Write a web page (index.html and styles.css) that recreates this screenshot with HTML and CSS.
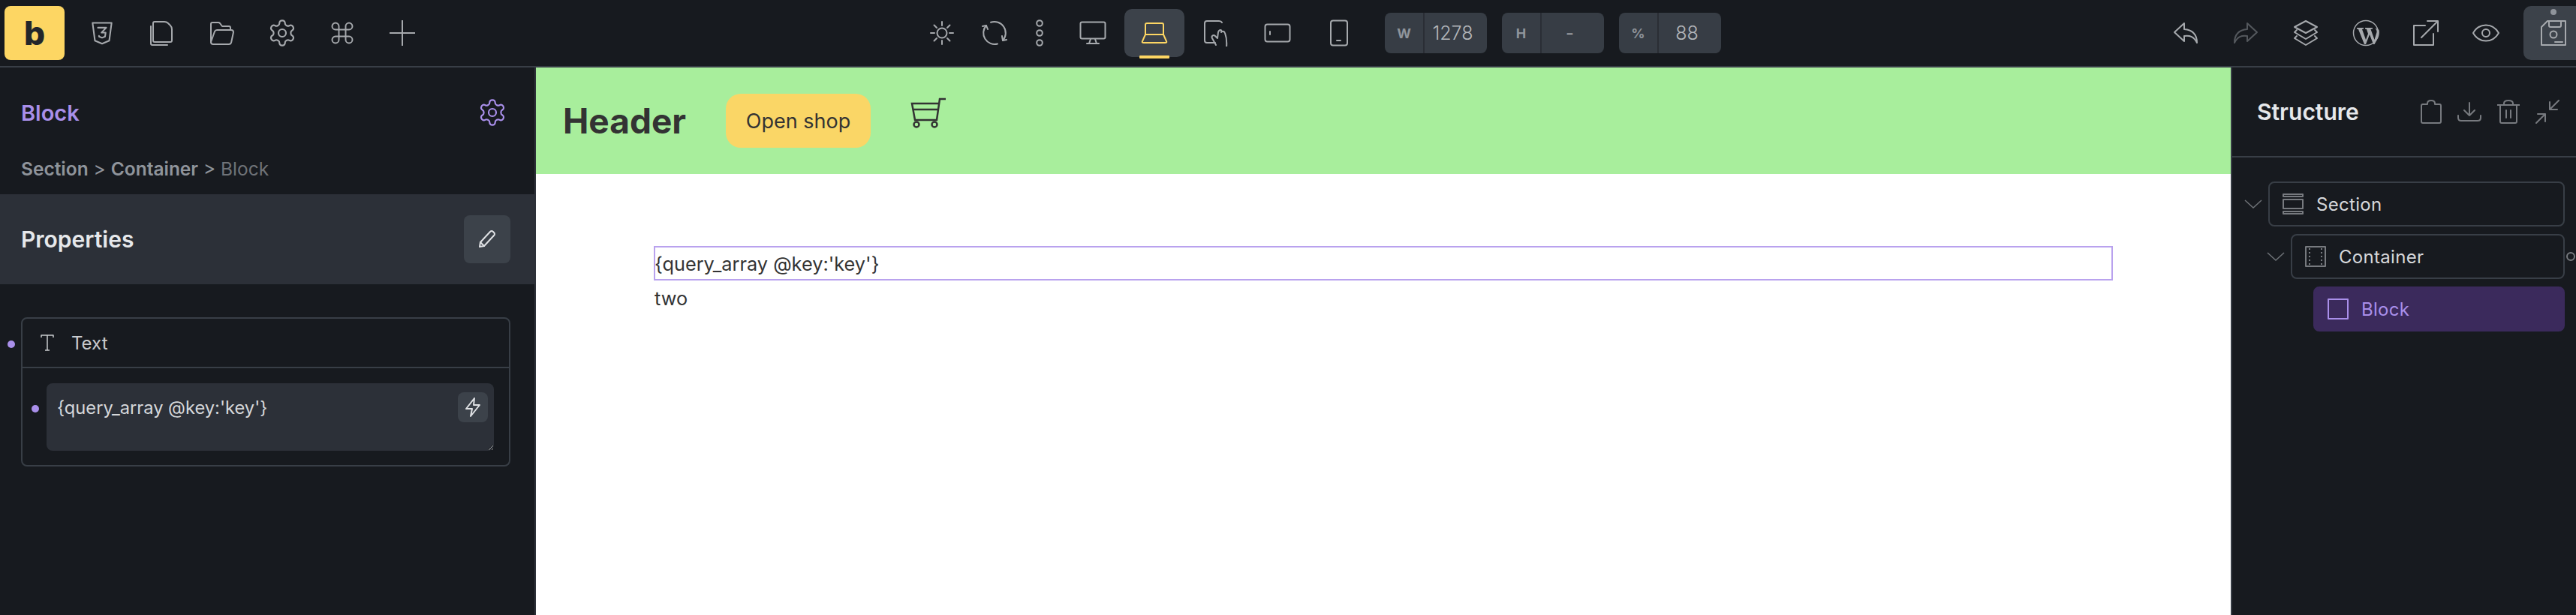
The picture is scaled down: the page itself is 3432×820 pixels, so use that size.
FILE: index.html
```html
<!DOCTYPE html>
<html lang="en">
<head>
<meta charset="utf-8">
<title>Builder</title>
<link rel="stylesheet" href="styles.css">
</head>
<body>
<svg class="defs" width="0" height="0" aria-hidden="true">
  <symbol id="gear" viewBox="0 0 24 24"><path d="M12.22 2h-.44a2 2 0 0 0-2 2v.18a2 2 0 0 1-1 1.73l-.43.25a2 2 0 0 1-2 0l-.15-.08a2 2 0 0 0-2.730.73l-.22.38a2 2 0 0 0 .73 2.730l.15.1a2 2 0 0 1 1 1.720v.51a2 2 0 0 1-1 1.740l-.15.09a2 2 0 0 0-.73 2.730l.22.38a2 2 0 0 0 2.730.73l.15-.08a2 2 0 0 1 2 0l.43.25a2 2 0 0 1 1 1.730V20a2 2 0 0 0 2 2h.44a2 2 0 0 0 2-2v-.18a2 2 0 0 1 1-1.730l.43-.25a2 2 0 0 1 2 0l.15.08a2 2 0 0 0 2.730-.73l.22-.39a2 2 0 0 0-.73-2.730l-.15-.08a2 2 0 0 1-1-1.740v-.5a2 2 0 0 1 1-1.740l.15-.09a2 2 0 0 0 .73-2.730l-.22-.38a2 2 0 0 0-2.730-.73l-.15.08a2 2 0 0 1-2 0l-.43-.25a2 2 0 0 1-1-1.730V4a2 2 0 0 0-2-2z"/><circle cx="12" cy="12" r="3"/></symbol>
  <symbol id="chev" viewBox="0 0 24 12"><path d="M1 1l11 10L23 1"/></symbol>
</svg>

<header class="topbar">
  <div class="tb-left">
    <div class="logo">b</div>
    <span class="slot"><svg class="ic" width="38" height="38" viewBox="0 0 24 24"><path d="M20 3.500l-2 15-6 2.500-6-2.500-2-15z"/><path d="M8.500 7.500h7l-4 4.200h3.500l-.5 3.300-2.500 1-2.500-1-.1-.6"/></svg></span>
    <span class="slot"><svg class="ic" width="34" height="34" viewBox="0 0 34 34"><path d="M7 2h13q3 0 5 2l3 3q2 2 2 5v15q0 2-2 2H7q-2 0-2-2V4q0-2 2-2z"/><path d="M2 8v23q0 2 2 2h20"/></svg></span>
    <span class="slot"><svg class="ic" width="34" height="34" viewBox="0 0 34 34"><path d="M2 29V5q0-2 2-2h8q1 0 2 1l3 4h9q2 0 2 2v3"/><path d="M2 29q0 3 3 3h21q2 0 3-2l3-14q0-3-3-3H10q-2 0-3 2z"/></svg></span>
    <span class="slot"><svg class="ic" width="40" height="40" viewBox="0 0 24 24"><use href="#gear"/></svg></span>
    <span class="slot"><svg class="ic" width="36" height="36" viewBox="0 0 24 24"><path d="M15 6v12a3 3 0 1 0 3-3H6a3 3 0 1 0 3 3V6a3 3 0 1 0-3 3h12a3 3 0 1 0-3-3"/></svg></span>
    <span class="slot"><svg class="ic" width="34" height="34" viewBox="0 0 34 34"><path d="M17 0v34M0 17h34"/></svg></span>
  </div>

  <div class="tb-center">
    <span class="slot slot-sun"><svg class="ic" width="32" height="32" viewBox="0 0 32 32"><circle cx="16" cy="16" r="6.500"/><path d="M16 1v5M16 26v5M1 16h5M26 16h5M5.500 5.500L9 9M23 23l3.500 3.500M5.500 26.500L9 23M23 9l3.500-3.500"/></svg></span>
    <span class="slot slot-sync"><svg class="ic" width="34" height="34" viewBox="0 0 34 34"><path d="M6 7A15 15 0 0 0 21 31.500"/><path d="M12 2.800A15 15 0 0 1 28 27"/><path d="M1 8l5-1 2 5"/><path d="M33 26l-5 1-1-6"/></svg></span>
    <span class="slot slot-dots"><svg class="ic" width="12" height="36" viewBox="0 0 12 36"><circle cx="6" cy="5" r="3.800"/><circle cx="6" cy="18" r="3.800"/><circle cx="6" cy="31" r="3.800"/></svg></span>
    <span class="slot"><svg class="ic" width="36" height="32" viewBox="0 0 36 32"><rect x="1.500" y="1.500" width="33" height="22" rx="2"/><path d="M15 24l-2 6M21 24l2 6M10 30h16"/></svg></span>
    <span class="slot slot-active"><svg class="ic ic-yellow" width="36" height="30" viewBox="0 0 36 30"><path d="M6 17V4q0-2 2-2h20q2 0 2 2v13"/><path d="M6 17h24l4 9q1 2-2 2H4q-3 0-2-2z"/></svg></span>
    <span class="slot"><svg class="ic" width="34" height="36" viewBox="0 0 34 36"><path d="M16 31H5q-3 0-3-3V5q0-3 3-3h16q3 0 4 2"/><path d="M17 34l-5-9q-1-2 0-3 2-2 4 0l3 3 1-8q1-3 3-3t1 3l1-1q3-1 4 2 3 8 2 19"/></svg></span>
    <span class="slot"><svg class="ic" width="36" height="26" viewBox="0 0 36 26"><rect x="1.500" y="1.500" width="33" height="23" rx="3"/><path d="M8 11v4"/></svg></span>
    <span class="slot"><svg class="ic" width="26" height="36" viewBox="0 0 26 36"><rect x="2" y="1.500" width="22" height="33" rx="3"/><path d="M10 28h5"/></svg></span>
  </div>

  <div class="stats">
    <div class="stat"><span class="stat-key">W</span><span class="stat-val">1278</span></div>
    <div class="stat"><span class="stat-key">H</span><span class="stat-val">-</span></div>
    <div class="stat"><span class="stat-key">%</span><span class="stat-val">88</span></div>
  </div>

  <div class="tb-right">
    <span class="slot"><svg class="ic" width="34" height="30" viewBox="0 0 34 30"><path d="M15 2L2 14l13 12v-7c8-1 13 1 17 9 0-11-5-17-17-18z"/></svg></span>
    <span class="slot"><svg class="ic ic-dim" width="34" height="30" viewBox="0 0 34 30"><path d="M19 2l13 12-13 12v-7c-8-1-13 1-17 9 0-11 5-17 17-18z"/></svg></span>
    <span class="slot"><svg class="ic" width="36" height="36" viewBox="0 0 36 36"><path d="M18 2l15 8-15 8-15-8z"/><path d="M6 14l-3 3 15 9 15-9-3-3"/><path d="M6 22l-3 3 15 9 15-9-3-3"/></svg></span>
    <span class="slot"><svg class="ic ic-thin" width="36" height="36" viewBox="0 0 36 36"><circle cx="18" cy="18" r="16.500"/><path class="fill" d="M6 11h9v1.500l-2 .5 5 14 3-8-2-6-2-.5V11h10v1.500l-2.500.5 5 14 3-10q.5-3-2-5 3-.5 5 2 1 5-1 10l-5 9h-1.500l-5-13-5 13H16L8 13l-2-.5z"/></svg></span>
    <span class="slot"><svg class="ic" width="36" height="36" viewBox="0 0 36 36"><path d="M17 8H2v26h26V19"/><path d="M12 24L34 2M20 2h14v14"/></svg></span>
    <span class="slot"><svg class="ic" width="36" height="24" viewBox="0 0 36 24"><path d="M1 12C5 5 11 1.500 18 1.500S31 5 35 12c-4 7-10 10.500-17 10.500S5 19 1 12z"/><circle cx="18" cy="12" r="5"/></svg></span>
    <div class="save">
      <span class="save-dot"></span>
      <svg class="ic" width="36" height="36" viewBox="0 0 36 36"><path d="M10 2h24v32H2V10z"/><path d="M12 2v6q0 2 2 2h12q2 0 2-2V2"/><circle cx="18" cy="20" r="4.500"/><path d="M20 30h10"/></svg>
    </div>
  </div>
</header>

<main class="workspace">
  <aside class="left-panel">
    <div class="el-head">
      <span class="el-title">Block</span>
      <svg class="ic ic-purple" width="40" height="40" viewBox="0 0 24 24"><use href="#gear"/></svg>
    </div>
    <div class="crumbs"><b>Section</b> &gt; <b>Container</b> &gt; <span class="crumb-cur">Block</span></div>
    <div class="props-bar">
      <span class="props-title">Properties</span>
      <span class="props-btn"><svg class="ic ic-light" width="26" height="26" viewBox="0 0 26 26"><path d="M3 23l1-6L17 3q2-2 4 0l1 1q2 2 0 4L9 22z"/><path d="M4 17l5 5"/></svg></span>
    </div>
    <div class="control">
      <span class="dot dot-a"></span>
      <div class="control-head">
        <svg class="ic ic-t" width="18" height="22" viewBox="0 0 18 22"><path d="M1 4V1h16v3M9 1v20M6 21h6"/></svg>
        <span>Text</span>
      </div>
      <div class="control-body">
        <span class="dot dot-b"></span>
        <div class="area-wrap">
          <textarea class="area" spellcheck="false">{query_array @key:'key'}</textarea>
          <span class="bolt"><svg class="ic ic-light" width="22" height="28" viewBox="0 0 22 28"><path d="M13 2L2 16h8l-2 10 12-15h-8z"/></svg></span>
        </div>
      </div>
    </div>
  </aside>

  <section class="canvas">
    <div class="site-header">
      <h1 class="site-title">Header</h1>
      <a class="shop-btn">Open shop</a>
      <svg class="cart" width="48" height="42" viewBox="0 0 48 42"><path d="M47 2h-8l-4 28H6L2 8h36M3 16h34"/><circle cx="8" cy="36" r="3.500"/><circle cx="32" cy="36" r="3.500"/></svg>
    </div>
    <div class="content">
      <div class="selected">{query_array @key:'key'}</div>
      <div class="plain">two</div>
    </div>
  </section>

  <aside class="right-panel">
    <div class="struct-head">
      <span class="struct-title">Structure</span>
      <div class="struct-tools">
        <svg class="ic ic-mid" width="28" height="32" viewBox="0 0 28 32"><path d="M9 6H3q-2 0-2 2v21q0 2 2 2h22q2 0 2-2V8q0-2-2-2h-6v-1q0-4-5-4t-5 4z"/></svg>
        <svg class="ic ic-mid" width="32" height="26" viewBox="0 0 32 26"><path d="M16 1v17M9 11l7 7 7-7M1 18v3q0 4 4 4h22q4 0 4-4v-3"/></svg>
        <svg class="ic ic-mid" width="30" height="32" viewBox="0 0 30 32"><path d="M0 7h30M4 7v22q0 2 2 2h18q2 0 2-2V7M9 7V5q0-4 6-4t6 4v2M12 14v10M18 14v10"/></svg>
        <svg class="ic ic-mid" width="32" height="32" viewBox="0 0 32 32"><path d="M31 1L19 13M19 3v10h10M1 31l12-12M3 19h10v10"/></svg>
      </div>
    </div>
    <div class="tree">
      <div class="row depth-0">
        <svg class="chev" width="24" height="12"><use href="#chev"/></svg>
        <div class="node">
          <svg class="ic ic-mid" width="28" height="28" viewBox="0 0 28 28"><path d="M1 1h26v3H1zM1 24h26v3H1zM1 8h26v12H1z"/></svg>
          <span>Section</span>
        </div>
      </div>
      <div class="row depth-1">
        <svg class="chev" width="24" height="12"><use href="#chev"/></svg>
        <div class="node">
          <svg class="ic ic-mid" width="28" height="28" viewBox="0 0 28 28"><rect x="1" y="1" width="26" height="26"/><path class="dotted" d="M6 3v22M22 3v22"/></svg>
          <span>Container</span>
        </div>
        <span class="more"></span>
      </div>
      <div class="row depth-2">
        <div class="node node-active">
          <svg class="ic ic-purple" width="28" height="28" viewBox="0 0 28 28"><rect x="1" y="1" width="26" height="26"/></svg>
          <span>Block</span>
        </div>
      </div>
    </div>
  </aside>
</main>
</body>
</html>
```

FILE: styles.css
```css
* { box-sizing: border-box; }
html, body { margin: 0; height: 100%; overflow: hidden; }
body {
  background: #171a1f;
  font-family: Inter, "Liberation Sans", sans-serif;
  color: #d6d8db;
  display: flex;
  flex-direction: column;
}
.defs { position: absolute; }

.ic { fill: none; stroke: #a6a9ad; stroke-width: 2; stroke-linecap: round; stroke-linejoin: round; }
.ic[viewBox="0 0 24 24"] { stroke-width: 1.3; }
.ic-yellow { stroke: #fdd663; }
.ic-dim { stroke: #54585d; }
.ic-purple { stroke: #a98fea; }
.ic-light { stroke: #dfe1e4; }
.ic-mid { stroke: #777a7f; }
.ic-t { stroke: #c9cbce; stroke-width: 1.500; stroke-linecap: butt; }
.ic-thin { stroke-width: 1.500; }
.ic .fill { fill: #a6a9ad; stroke: none; }
.dotted { stroke-dasharray: 2 3; stroke-linecap: butt; }

.topbar {
  flex: none;
  height: 90px;
  display: flex;
  align-items: center;
  border-bottom: 2px solid #383e46;
  padding-bottom: 6px;
}
.tb-left { flex: none; width: 1220px; display: flex; align-items: center; padding-left: 6px; }
.logo {
  width: 80px;
  height: 72px;
  margin-right: 10px;
  margin-top: 6px;
  border-radius: 8px;
  background: #fdd663;
  color: #23262a;
  font-size: 44px;
  font-weight: 800;
  line-height: 72px;
  text-align: center;
}
.slot { flex: none; width: 80px; height: 64px; margin-top: 6px; display: flex; align-items: center; justify-content: center; }
.slot-sun { width: 70px; }
.slot-sync { width: 66px; }
.slot-dots { width: 50px; margin-right: 4px; }
.tb-center { flex: none; display: flex; align-items: center; gap: 2px; }
.slot-active { position: relative; background: #3c424a; border-radius: 10px; }
.slot-active::after {
  content: "";
  position: absolute;
  left: 20px;
  right: 20px;
  bottom: -2px;
  height: 4px;
  border-radius: 1px;
  background: #fdd663;
}

.stats { flex: none; display: flex; gap: 20px; margin-left: 21px; margin-top: 6px; }
.stat { width: 136px; height: 54px; display: flex; background: #373d45; border-radius: 8px; }
.stat-key {
  flex: none;
  width: 53px;
  border-right: 2px solid #2a2e35;
  display: flex; align-items: center; justify-content: center;
  font-size: 18px; font-weight: 700; color: #8f949b;
}
.stat-val {
  flex: 1;
  padding-right: 8px;
  display: flex; align-items: center; justify-content: center;
  font-size: 25px; font-weight: 300; color: #b4b7bb;
}

.tb-right { flex: none; display: flex; align-items: center; margin-left: auto; }
.save {
  position: relative;
  flex: none;
  width: 70px;
  height: 72px;
  margin-left: 10px;
  margin-top: 6px;
  padding-left: 22px;
  display: flex;
  align-items: center;
  background: #3c424a;
  border-radius: 10px 0 0 10px;
}
.save-dot {
  position: absolute;
  left: 36px;
  top: 4px;
  width: 8px;
  height: 8px;
  border-radius: 50%;
  background: #8f949b;
}

.workspace { flex: 1; min-height: 0; display: flex; }

.left-panel { flex: none; width: 714px; border-right: 2px solid #2c3038; }
.el-head {
  height: 120px;
  padding: 0 36px 0 28px;
  display: flex;
  align-items: center;
  justify-content: space-between;
}
.el-title { font-size: 29px; font-weight: 600; color: #a98fea; }
.crumbs { height: 49px; padding: 2px 0 0 28px; font-size: 24.500px; line-height: 26px; color: #8f949b; }
.crumbs b { font-weight: 600; }
.crumb-cur { color: #6f7378; }
.props-bar {
  height: 120px;
  padding: 0 32px 0 28px;
  display: flex;
  align-items: center;
  justify-content: space-between;
  background: #2c3038;
}
.props-title { font-size: 30px; font-weight: 600; color: #e6e8eb; }
.props-btn { width: 62px; height: 64px; border-radius: 8px; background: #3c424a; display: flex; align-items: center; justify-content: center; }
.control {
  position: relative;
  width: 652px;
  height: 199px;
  margin: 44px 0 0 28px;
  border: 2px solid #383e46;
  border-radius: 8px;
}
.dot { position: absolute; width: 10px; height: 10px; border-radius: 50%; background: #a98fea; }
.dot-a { left: -20px; top: 29px; }
.dot-b { left: 12px; top: 115px; }
.control-head {
  height: 66px;
  padding-left: 24px;
  display: flex;
  align-items: center;
  gap: 23px;
  border-bottom: 2px solid #383e46;
  font-size: 24px;
  color: #c9cbce;
}
.control-body { padding: 20px 20px 0 32px; }
.area-wrap { position: relative; height: 90px; }
.area {
  display: block;
  width: 596px;
  height: 90px;
  padding: 18px 14px;
  border: 0;
  border-radius: 8px;
  outline: 0;
  background: #2c3038;
  color: #d6d8db;
  font-family: Inter, "Liberation Sans", sans-serif;
  font-size: 23.700px;
  line-height: 29px;
}
.bolt { position: absolute; right: 8px; top: 12px; width: 40px; height: 40px; border-radius: 8px; background: #3c424a; display: flex; align-items: center; justify-content: center; }

.canvas { flex: 1; min-width: 0; background: #fff; color: #333; }
.site-header { height: 142px; background: #a8ee9c; display: flex; align-items: center; padding-left: 36px; }
.site-title { margin: 0; font-size: 46px; font-weight: 700; color: #333; }
.shop-btn {
  margin-left: 53px;
  width: 193px;
  height: 72px;
  border-radius: 20px;
  background: #fad666;
  display: flex;
  align-items: center;
  justify-content: center;
  font-size: 27px;
  color: #333;
}
.cart { flex: none; align-self: flex-start; margin: 40px 0 0 53px; fill: none; stroke: #333; stroke-width: 2.500; }
.content { padding: 97px 158px 0; font-size: 25.300px; }
.selected { height: 44px; line-height: 46px; outline: 2px solid #b9a2ee; outline-offset: -1px; }
.plain { height: 50px; line-height: 50px; }

.right-panel { flex: none; width: 460px; border-left: 2px solid #383e46; overflow: hidden; }
.struct-head {
  height: 120px;
  padding: 0 22px 0 33px;
  border-bottom: 2px solid #383e46;
  display: flex;
  align-items: center;
  justify-content: space-between;
}
.struct-title { font-size: 30px; font-weight: 600; color: #e6e8eb; }
.struct-tools { display: flex; align-items: center; gap: 21px; }
.tree { padding: 32px 15px 0 0; display: flex; flex-direction: column; gap: 10px; }
.row { position: relative; height: 60px; display: flex; align-items: center; }
.depth-0 { padding-left: 16px; }
.depth-1 { padding-left: 46px; }
.depth-2 { padding-left: 108px; }
.chev { flex: none; margin-right: 8px; fill: none; stroke: #6f7378; stroke-width: 1.500; }
.node {
  flex: 1;
  height: 60px;
  padding-left: 17px;
  display: flex;
  align-items: center;
  gap: 17px;
  border: 2px solid #383e46;
  border-radius: 8px;
  font-size: 24px;
  letter-spacing: .3px;
  color: #d6d8db;
}
.node-active { background: #3b2a5c; border-color: #3b2a5c; color: #a98fea; }
.more {
  position: absolute;
  right: -14px;
  top: 24px;
  width: 12px;
  height: 12px;
  border: 2px solid #777a7f;
  border-radius: 50%;
}
```
